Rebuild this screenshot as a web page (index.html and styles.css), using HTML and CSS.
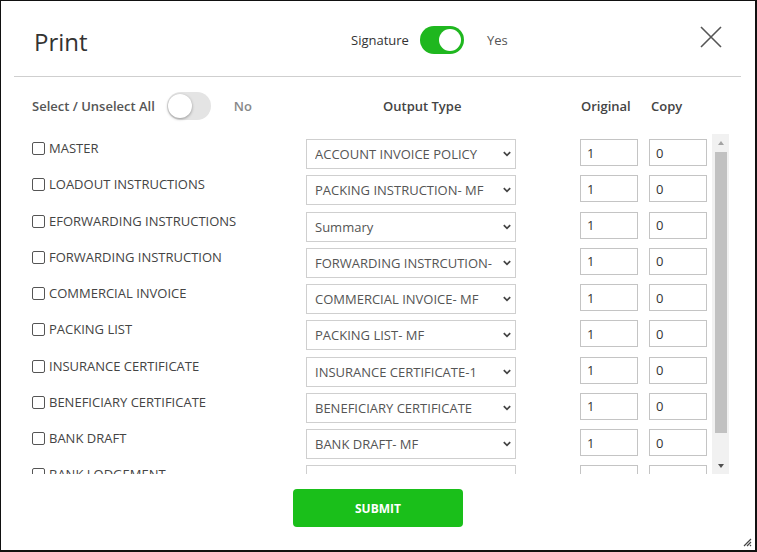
FILE: index.html
```html
<!DOCTYPE html>
<html>
<head>
<meta charset="utf-8">
<link rel="stylesheet" href="styles.css">
</head>
<body>
<div class="dialog">
  <div class="head">
    <h1 class="title">Print</h1>
    <div class="sig">
      <span class="sig-label">Signature</span>
      <span class="toggle on"><span class="knob"></span></span>
      <span class="sig-val">Yes</span>
    </div>
    <button class="close" aria-label="Close">
      <svg width="22" height="22" viewBox="0 0 22 22"><path d="M1 1L21 21M21 1L1 21" stroke="#555" stroke-width="1.6" fill="none"/></svg>
    </button>
  </div>

  <div class="grid colhead">
    <div class="selall">
      <span class="selall-label">Select / Unselect All</span>
      <span class="toggle off"><span class="knob"></span></span>
      <span class="no">No</span>
    </div>
    <div class="h-output">Output Type</div>
    <div class="h-orig">Original</div>
    <div class="h-copy">Copy</div>
  </div>

  <div class="listwrap">
    <div class="list">
      <div class="grid row">
        <label class="doc"><input type="checkbox" class="cb"><span>MASTER</span></label>
        <div class="sel"><select><option>ACCOUNT INVOICE POLICY</option></select><svg class="chev" width="8" height="6" viewBox="0 0 8 6"><path d="M0.8 1.2L4 4.4L7.2 1.2" stroke="#444" stroke-width="1.7" fill="none"/></svg></div>
        <input class="num orig" value="1"><input class="num copy" value="0">
      </div>
      <div class="grid row">
        <label class="doc"><input type="checkbox" class="cb"><span>LOADOUT INSTRUCTIONS</span></label>
        <div class="sel"><select><option>PACKING INSTRUCTION- MF</option></select><svg class="chev" width="8" height="6" viewBox="0 0 8 6"><path d="M0.8 1.2L4 4.4L7.2 1.2" stroke="#444" stroke-width="1.7" fill="none"/></svg></div>
        <input class="num orig" value="1"><input class="num copy" value="0">
      </div>
      <div class="grid row">
        <label class="doc"><input type="checkbox" class="cb"><span>EFORWARDING INSTRUCTIONS</span></label>
        <div class="sel"><select><option>Summary</option></select><svg class="chev" width="8" height="6" viewBox="0 0 8 6"><path d="M0.8 1.2L4 4.4L7.2 1.2" stroke="#444" stroke-width="1.7" fill="none"/></svg></div>
        <input class="num orig" value="1"><input class="num copy" value="0">
      </div>
      <div class="grid row">
        <label class="doc"><input type="checkbox" class="cb"><span>FORWARDING INSTRUCTION</span></label>
        <div class="sel"><select class="tight"><option>FORWARDING INSTRCUTION- MF</option></select><svg class="chev" width="8" height="6" viewBox="0 0 8 6"><path d="M0.8 1.2L4 4.4L7.2 1.2" stroke="#444" stroke-width="1.7" fill="none"/></svg></div>
        <input class="num orig" value="1"><input class="num copy" value="0">
      </div>
      <div class="grid row">
        <label class="doc"><input type="checkbox" class="cb"><span>COMMERCIAL INVOICE</span></label>
        <div class="sel"><select><option>COMMERCIAL INVOICE- MF</option></select><svg class="chev" width="8" height="6" viewBox="0 0 8 6"><path d="M0.8 1.2L4 4.4L7.2 1.2" stroke="#444" stroke-width="1.7" fill="none"/></svg></div>
        <input class="num orig" value="1"><input class="num copy" value="0">
      </div>
      <div class="grid row">
        <label class="doc"><input type="checkbox" class="cb"><span>PACKING LIST</span></label>
        <div class="sel"><select><option>PACKING LIST- MF</option></select><svg class="chev" width="8" height="6" viewBox="0 0 8 6"><path d="M0.8 1.2L4 4.4L7.2 1.2" stroke="#444" stroke-width="1.7" fill="none"/></svg></div>
        <input class="num orig" value="1"><input class="num copy" value="0">
      </div>
      <div class="grid row">
        <label class="doc"><input type="checkbox" class="cb"><span>INSURANCE CERTIFICATE</span></label>
        <div class="sel"><select><option>INSURANCE CERTIFICATE-1</option></select><svg class="chev" width="8" height="6" viewBox="0 0 8 6"><path d="M0.8 1.2L4 4.4L7.2 1.2" stroke="#444" stroke-width="1.7" fill="none"/></svg></div>
        <input class="num orig" value="1"><input class="num copy" value="0">
      </div>
      <div class="grid row">
        <label class="doc"><input type="checkbox" class="cb"><span>BENEFICIARY CERTIFICATE</span></label>
        <div class="sel"><select><option>BENEFICIARY CERTIFICATE</option></select><svg class="chev" width="8" height="6" viewBox="0 0 8 6"><path d="M0.8 1.2L4 4.4L7.2 1.2" stroke="#444" stroke-width="1.7" fill="none"/></svg></div>
        <input class="num orig" value="1"><input class="num copy" value="0">
      </div>
      <div class="grid row">
        <label class="doc"><input type="checkbox" class="cb"><span>BANK DRAFT</span></label>
        <div class="sel"><select><option>BANK DRAFT- MF</option></select><svg class="chev" width="8" height="6" viewBox="0 0 8 6"><path d="M0.8 1.2L4 4.4L7.2 1.2" stroke="#444" stroke-width="1.7" fill="none"/></svg></div>
        <input class="num orig" value="1"><input class="num copy" value="0">
      </div>
      <div class="grid row">
        <label class="doc"><input type="checkbox" class="cb"><span>BANK LODGEMENT</span></label>
        <div class="sel"><select><option>BANK LODGEMENT- MF</option></select><svg class="chev" width="8" height="6" viewBox="0 0 8 6"><path d="M0.8 1.2L4 4.4L7.2 1.2" stroke="#444" stroke-width="1.7" fill="none"/></svg></div>
        <input class="num orig" value="1"><input class="num copy" value="0">
      </div>
    </div>
    <div class="vscroll" aria-hidden="true">
      <div class="sbtn up"><span class="tri-up"></span></div>
      <div class="strack"><div class="sthumb"></div></div>
      <div class="sbtn down"><span class="tri-down"></span></div>
    </div>
  </div>

  <div class="foot">
    <button class="submit">SUBMIT</button>
  </div>

  <svg class="grip" width="10" height="10" viewBox="0 0 10 10"><path d="M9 2L2 9M9 5L5 9M9 8L8 9" stroke="#444" stroke-width="1.2" fill="none"/></svg>
</div>
</body>
</html>
```
FILE: styles.css
```css
* { box-sizing: border-box; }
html, body { margin: 0; padding: 0; background: #fff; }
body { font-family: "Open Sans", "Liberation Sans", sans-serif; color: #444; }

.dialog {
  position: relative;
  width: 757px;
  height: 552px;
  border: 1px solid #111;
  border-right-width: 2px;
  border-bottom-width: 2px;
  background: #fff;
  overflow: hidden;
}

.head {
  display: flex;
  align-items: center;
  height: 76px;
  margin: 0 14px 0 13px;
  padding: 6px 0 0 20px;
  border-bottom: 1px solid #cfcfcf;
}
.title {
  margin: 0;
  width: 317px;
  font-size: 24px;
  font-weight: 400;
  color: #333;
  line-height: 30px;
}
.sig { display: flex; align-items: center; margin-top: -4px; }
.sig-label { font-size: 13px; color: #333; margin-right: 11px; }
.sig-val { font-size: 13px; color: #555; margin-left: 23px; }

.toggle {
  position: relative;
  display: inline-block;
  width: 44px;
  height: 28px;
  border-radius: 14px;
}
.toggle .knob {
  position: absolute;
  top: 3px;
  width: 22px;
  height: 22px;
  border-radius: 50%;
  background: #fff;
}
.toggle.on { background: #1fb71f; }
.toggle.on .knob { right: 3px; }
.toggle.off { background: #e4e4e4; }
.toggle.off .knob { left: 1px; top: 2px; width: 24px; height: 24px; box-shadow: 0 1px 3px rgba(0,0,0,0.35); }

.close {
  margin-left: auto;
  margin-right: 19px;
  margin-top: -10px;
  padding: 0;
  border: 0;
  background: none;
  width: 22px;
  height: 22px;
}
.close svg { display: block; }

.grid {
  display: grid;
  grid-template-columns: 274px 210px 64px 58px 11px 58px;
}
.colhead {
  height: 57px;
  padding-left: 31px;
  align-items: center;
  font-size: 13px;
  color: #444;
}
.selall { display: flex; align-items: center; }
.selall-label { font-size: 13px; color: #555; margin-right: 12px; font-weight: 600; }
.no { margin-left: 23px; color: #888; font-weight: 600; }
.h-output { grid-column: 2; padding-left: 77px; font-weight: 600; color: #444; }
.h-orig { grid-column: 4; padding-left: 1px; font-weight: 600; color: #444; white-space: nowrap; }
.h-copy { grid-column: 6; padding-left: 2px; font-weight: 600; color: #444; }

.listwrap {
  display: flex;
  height: 340px;
  margin-left: 13px;
}
.list {
  width: 698px;
  height: 340px;
  overflow: hidden;
  padding: 5px 5px 0 18px;
}

.vscroll {
  display: flex;
  flex-direction: column;
  width: 17px;
  height: 340px;
  background: #f1f1f1;
}
.sbtn {
  display: flex;
  align-items: center;
  justify-content: center;
  height: 17px;
  flex: 0 0 auto;
}
.tri-up {
  width: 0; height: 0;
  border-left: 3.5px solid transparent;
  border-right: 3.5px solid transparent;
  border-bottom: 4px solid #a3a3a3;
}
.tri-down {
  width: 0; height: 0;
  border-left: 3.5px solid transparent;
  border-right: 3.5px solid transparent;
  border-top: 4px solid #505050;
}
.strack { flex: 1; padding: 1px 2px 0 3px; }
.sthumb { height: 281px; background: #c1c1c1; }

.row {
  align-items: start;
  height: 30px;
  margin-bottom: 6.25px;
}
.row .sel { grid-column: 2; }
.row .orig { grid-column: 4; }
.row .copy { grid-column: 6; }

.doc {
  display: flex;
  align-items: flex-start;
  font-size: 13px;
  line-height: 18px;
  color: #444;
}
.cb {
  -webkit-appearance: none;
  appearance: none;
  width: 13px;
  height: 13px;
  margin: 3px 4px 0 0;
  border: 1px solid #555;
  border-radius: 2px;
  background: #fff;
  flex: 0 0 auto;
}

.sel { position: relative; width: 210px; height: 30px; }
.sel select {
  -webkit-appearance: none;
  appearance: none;
  width: 210px;
  height: 30px;
  border: 1px solid #cfcfcf;
  border-radius: 0;
  background: #fff;
  padding: 0 18px 0 8px;
  font-family: "Open Sans", "Liberation Sans", sans-serif;
  font-size: 13px;
  color: #555;
  outline: none;
}
.sel select.tight { padding-right: 23px; }
.chev { position: absolute; right: 5px; top: 12px; }

.num {
  width: 58px;
  height: 27px;
  border: 1px solid #c4c4c4;
  border-radius: 0;
  padding: 0 0 0 6px;
  font-family: "Open Sans", "Liberation Sans", sans-serif;
  font-size: 13px;
  color: #333;
  outline: none;
}

.foot { display: flex; justify-content: center; padding-top: 15px; }
.submit {
  width: 170px;
  height: 38px;
  border: 0;
  border-radius: 4px;
  background: #1abf1a;
  color: #fff;
  font-family: "Open Sans", "Liberation Sans", sans-serif;
  font-size: 12px;
  font-weight: 700;
}

.grip { position: absolute; right: 3px; bottom: 3px; }
```
